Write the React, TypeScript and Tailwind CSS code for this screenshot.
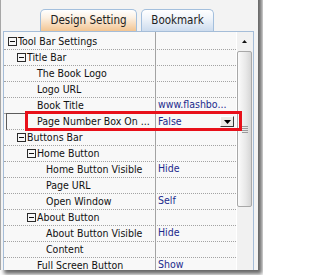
import React from "react";

type Row = {
  name: string;
  level: number;
  group?: boolean;
  value?: string;
  selected?: boolean;
};

const ROWS: Row[] = [
  { name: "Tool Bar Settings", level: 0, group: true },
  { name: "Title Bar", level: 1, group: true },
  { name: "The Book Logo", level: 2 },
  { name: "Logo URL", level: 2 },
  { name: "Book Title", level: 2, value: "www.flashbo..." },
  { name: "Page Number Box On ...", level: 2, value: "False", selected: true },
  { name: "Buttons Bar", level: 1, group: true },
  { name: "Home Button", level: 2, group: true },
  { name: "Home Button Visible", level: 3, value: "Hide" },
  { name: "Page URL", level: 3 },
  { name: "Open Window", level: 3, value: "Self" },
  { name: "About Button", level: 2, group: true },
  { name: "About Button Visible", level: 3, value: "Hide" },
  { name: "Content", level: 3 },
  { name: "Full Screen Button", level: 2, value: "Show" },
];

// padding before the +/- box for each tree level
const INDENT = ["pl-[4px]", "pl-[13px]", "pl-[23px]", "pl-[32px]"];

function MinusBox() {
  return (
    <span className="w-[9px] h-[9px] mr-[1px] shrink-0 border border-[#2b2b2b] flex items-center justify-center">
      <span className="w-[5px] h-px bg-[#111]" />
    </span>
  );
}

function DropButton() {
  return (
    <span className="w-[14px] h-[11px] bg-[#ecebe6] border border-t-white border-l-white border-r-[#3a3a3a] border-b-[#3a3a3a] flex items-center justify-center">
      <svg width="7" height="4" viewBox="0 0 7 4">
        <path d="M0 0h7L3.5 4z" fill="#000" />
      </svg>
    </span>
  );
}

function GridRow({ row }: { row: Row }) {
  const name = (
    <>
      {row.group ? <MinusBox /> : <span className="w-[10px] shrink-0" />}
      <span className="whitespace-nowrap text-[#111]">{row.name}</span>
    </>
  );

  if (row.selected) {
    return (
      <div className="flex h-[17px] -mt-px ml-[2px] border-t border-l border-b [border-top-style:solid] [border-left-style:solid] [border-bottom-style:dotted] border-t-[#5c5c5c] border-l-[#5c5c5c] border-b-[#a3a3a3]">
        <div className="w-[149px] h-[16px] pb-px shrink-0 flex items-center pl-[20px] border-r border-[#a3a3a3]">
          {name}
        </div>
        <div className="flex-1 flex items-center justify-between pl-[2px] pr-[2px]">
          <span className="text-[#1b2a8c]">{row.value}</span>
          <DropButton />
        </div>
      </div>
    );
  }

  return (
    <div className="flex h-[16px] shrink-0 border-b border-dotted border-[#a3a3a3]">
      <div className={`w-[152px] h-[16px] pb-px shrink-0 flex items-center border-r border-solid border-[#a3a3a3] ${INDENT[row.level]}`}>
        {name}
      </div>
      <div className="flex-1 flex items-center pl-[2px] pb-px overflow-hidden">
        {row.value && <span className="whitespace-nowrap text-[#1b2a8c]">{row.value}</span>}
      </div>
    </div>
  );
}

function ScrollBar() {
  return (
    <div className="w-[17px] shrink-0 flex flex-col bg-[#f1f1f1] border-l border-white">
      <div className="h-[19px] flex items-center justify-center pr-px">
        <svg width="5" height="3" viewBox="0 0 5 3">
          <path d="M2.5 0L5 3H0z" fill="#111" />
        </svg>
      </div>
      <div className="w-[15px] h-[156px] rounded-[2px] border border-[#a8a8a8] bg-[linear-gradient(to_right,#fbfbfb,#e8e8e8_60%,#d6d6d6)] flex flex-col items-center justify-center gap-px">
        <span className="w-[6px] h-px bg-[#9a9a9a]" />
        <span className="w-[6px] h-px bg-[#9a9a9a]" />
        <span className="w-[6px] h-px bg-[#9a9a9a]" />
        <span className="w-[6px] h-px bg-[#9a9a9a]" />
      </div>
    </div>
  );
}

export default function App() {
  return (
    <div
      className="relative w-[263px] h-[275px] bg-white overflow-hidden text-[10.5px]"
      style={{ fontFamily: "'DejaVu Sans Condensed', 'Liberation Sans', sans-serif" }}
    >
      <div className="-mt-[10px] w-[258px] h-[280px] bg-[#f3f3f3] border-l border-[#a6a6a6] shadow-[4px_4px_4px_rgba(0,0,0,0.6)] flex flex-col">
        {/* tabs */}
        <div className="h-[41px] shrink-0 pt-[19px] pl-[39px] flex gap-[4px]">
          <div className="w-[97px] h-[22px] rounded-t-[5px] border border-b-0 border-[#a3bfdd] bg-[linear-gradient(to_bottom,#ffffff_0%,#fcf1e4_35%,#f3c592_100%)] flex items-center justify-center text-[11.5px] text-[#222]">
            Design Setting
          </div>
          <div className="w-[73px] h-[22px] rounded-t-[5px] border border-b-0 border-[#a3bfdd] bg-[linear-gradient(to_bottom,#ffffff_0%,#eff4fa_40%,#cddcee_100%)] flex items-center justify-center text-[11.5px] text-[#222]">
            Bookmark
          </div>
        </div>

        {/* property grid */}
        <div className="ml-[2px] w-[251px] flex-1 min-h-0 border border-b-0 border-[#a5bdd8] bg-[#f8f8f8] flex overflow-hidden">
          <div className="w-[232px] shrink-0 flex flex-col">
            <div className="h-[2px] shrink-0">
              <div className="w-[152px] h-full border-r border-[#a3a3a3]" />
            </div>
            {ROWS.map((row) => (
              <GridRow key={row.name} row={row} />
            ))}
          </div>
          <ScrollBar />
        </div>
      </div>

      {/* red highlight drawn over the selected row */}
      <div className="absolute left-[25px] top-[111px] w-[217px] h-[20px] border-[3px] border-[#e8101a]" />
    </div>
  );
}
